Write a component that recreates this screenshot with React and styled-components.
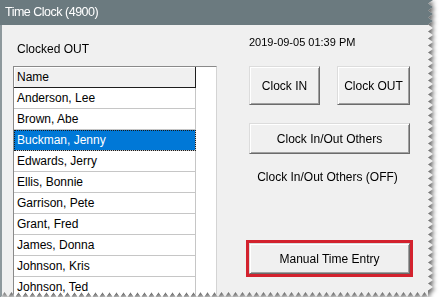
import React from "react";
import styled, { createGlobalStyle } from "styled-components";

const GlobalStyle = createGlobalStyle`
  body {
    margin: 0;
    background: #ffffff;
    font-family: "Liberation Sans", Arial, sans-serif;
  }
`;

const WIN_W = 433;
const WIN_H = 297;

// torn paper edge along the right and bottom sides
function tornEdge() {
  const pts = ["0px 0px"];
  let i = 0;
  for (let y = 0; y <= WIN_H - 5; y += 3.5, i++) {
    pts.push(`${i % 2 ? WIN_W - 5 : WIN_W}px ${y}px`);
  }
  i = 0;
  for (let x = WIN_W - 5; x >= 0; x -= 3.5, i++) {
    pts.push(`${x}px ${i % 2 ? WIN_H - 5 : WIN_H}px`);
  }
  pts.push(`0px ${WIN_H}px`);
  return `polygon(${pts.join(", ")})`;
}

const Shadow = styled.div`
  width: ${WIN_W}px;
  filter: drop-shadow(2px 2px 2px rgba(0, 0, 0, 0.6));
`;

const Window = styled.div`
  width: ${WIN_W}px;
  height: ${WIN_H}px;
  background: #f0f0f0;
  display: flex;
  flex-direction: column;
  clip-path: ${(p) => p.$clip};
  overflow: hidden;
`;

const TitleBar = styled.div`
  height: 25px;
  flex: none;
  background: #6b7a7f;
  color: #ffffff;
  font-size: 12.5px;
  letter-spacing: -0.5px;
  line-height: 25px;
  padding-left: 5px;
`;

const Body = styled.div`
  flex: 1;
  min-height: 0;
  display: flex;
  border-left: 2px solid #8d989c;
  padding-left: 11px;
`;

const LeftCol = styled.div`
  width: 204px;
  display: flex;
  flex-direction: column;
  padding-top: 17px;
`;

const Label = styled.div`
  font-size: 12px;
  line-height: 14px;
  color: #000;
  padding-left: 4px;
  margin-bottom: 10px;
`;

const ListBox = styled.div`
  flex: 1;
  background: #ffffff;
  border: 1px solid #8a8a8a;
  border-right-color: #d4d4d4;
  border-bottom: none;
  overflow: hidden;
`;

const HeaderCell = styled.div`
  width: 182px;
  height: 21px;
  box-sizing: border-box;
  line-height: 20px;
  font-size: 12px;
  color: #000;
  padding-left: 3px;
  background: #f0f0f0;
  border-bottom: 1px solid #1e1e1e;
  border-right: 1px solid #1e1e1e;
  box-shadow: inset 1px 1px #ffffff;
`;

const Row = styled.div`
  width: 182px;
  height: 21px;
  box-sizing: border-box;
  line-height: 20px;
  font-size: 12px;
  padding-left: 3px;
  white-space: nowrap;
  color: ${(p) => (p.$selected ? "#ffffff" : "#000000")};
  background: ${(p) => (p.$selected ? "#0078d7" : "#ffffff")};
  border-bottom: 1px solid #c6c6c6;
  border-right: 1px solid #c6c6c6;
  outline: ${(p) => (p.$selected ? "1px dotted #1a1a1a" : "none")};
  outline-offset: -1px;
`;

const RightCol = styled.div`
  width: 161px;
  margin-left: 32px;
  display: flex;
  flex-direction: column;
  padding-top: 11px;
`;

const DateText = styled.div`
  font-size: 11px;
  line-height: 13px;
  color: #000;
  margin-bottom: 17px;
`;

const ButtonRow = styled.div`
  display: flex;
  justify-content: space-between;
`;

const Button = styled.button`
  width: ${(p) => p.$w || 161}px;
  height: ${(p) => p.$h || 31}px;
  margin: ${(p) => p.$mt || 0}px 0 0;
  padding: 0;
  font-family: "Liberation Sans", Arial, sans-serif;
  font-size: 12px;
  color: #000;
  background: #f0f0f0;
  border: 1px solid;
  border-color: #dcdcdc #6b6b6b #6b6b6b #dcdcdc;
  box-shadow: inset 1px 1px #ffffff, inset -1px -1px #a0a0a0;
  outline: ${(p) => (p.$marked ? "3px solid #d3222e" : "none")};
`;

const Status = styled.div`
  font-size: 12px;
  line-height: 14px;
  color: #000;
  text-align: center;
  padding-right: 4px;
  margin: 16px 0 59px;
`;

const names = [
  "Anderson, Lee",
  "Brown, Abe",
  "Buckman, Jenny",
  "Edwards, Jerry",
  "Ellis, Bonnie",
  "Garrison, Pete",
  "Grant, Fred",
  "James, Donna",
  "Johnson, Kris",
  "Johnson, Ted",
];

export default function App() {
  return (
    <>
      <GlobalStyle />
      <Shadow>
        <Window $clip={tornEdge()}>
          <TitleBar>Time Clock (4900)</TitleBar>
          <Body>
            <LeftCol>
              <Label>Clocked OUT</Label>
              <ListBox>
                <HeaderCell>Name</HeaderCell>
                {names.map((n) => (
                  <Row key={n} $selected={n === "Buckman, Jenny"}>
                    {n}
                  </Row>
                ))}
              </ListBox>
            </LeftCol>
            <RightCol>
              <DateText>2019-09-05 01:39 PM</DateText>
              <ButtonRow>
                <Button $w={71} $h={39}>Clock IN</Button>
                <Button $w={73} $h={39}>Clock OUT</Button>
              </ButtonRow>
              <Button $mt={18}>Clock In/Out Others</Button>
              <Status>Clock In/Out Others (OFF)</Status>
              <Button $marked>Manual Time Entry</Button>
            </RightCol>
          </Body>
        </Window>
      </Shadow>
    </>
  );
}
